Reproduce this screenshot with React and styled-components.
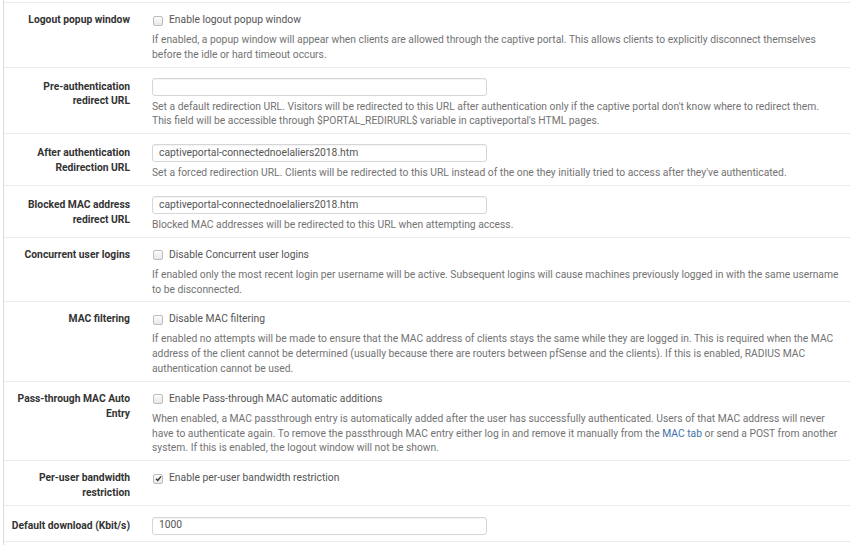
import styled, { createGlobalStyle } from "styled-components";

const GlobalStyle = createGlobalStyle`
  html, body {
    margin: 0;
    padding: 0;
    background: #fff;
  }
  body {
    font-family: Roboto, "Liberation Sans", Arial, sans-serif;
    font-size: 10.3px;
    line-height: 14.8px;
    color: #333;
  }
`;

const Panel = styled.div`
  margin-left: 3px;
  border-left: 1px solid #dcdcdc;
  padding-top: 2px;
  background: #fff;
`;

const Row = styled.div`
  display: grid;
  grid-template-columns: 127px 1fr;
  column-gap: 21px;
  padding: ${(p) => (p.$tall ? "11px 8px 6px 0" : "10px 8px 4px 0")};
  border-top: 1px solid #ebebeb;
`;

const Label = styled.div`
  text-align: right;
  font-weight: 700;
  color: #333;
  padding: ${(p) => (p.$input ? "2px" : "0")} 1px 0 7px;
`;

const Content = styled.div`
  display: flex;
  flex-direction: column;
  min-width: 0;
`;

const CheckLine = styled.label`
  display: flex;
  align-items: center;
  gap: 6px;
  color: #555;
  height: 15px;
  padding-left: 1px;
`;

const Box = styled.span`
  width: 8px;
  height: 8px;
  border: 1px solid #bdbdbd;
  border-radius: 2px;
  background: linear-gradient(#fdfdfd, #e8e8e8);
  display: flex;
  align-items: center;
  justify-content: center;
  flex-shrink: 0;
`;

const TextInput = styled.div`
  width: 335px;
  height: 18px;
  box-sizing: border-box;
  border: 1px solid #d6d6d6;
  border-radius: 3px;
  box-shadow: inset 0 1px 1px rgba(0, 0, 0, 0.05);
  padding: 0 6px;
  display: flex;
  align-items: center;
  color: #555;
`;

const Help = styled.div`
  margin-top: ${(p) => (p.$afterInput ? "4px" : "5px")};
  color: #737373;
`;

const Link = styled.a`
  color: #3f72a8;
  text-decoration: none;
`;

const Check = ({ checked, children }) => (
  <CheckLine>
    <Box>
      {checked && (
        <svg width="7" height="7" viewBox="0 0 10 10">
          <path d="M1.5 5.2 L4 7.8 L8.6 2" fill="none" stroke="#333" strokeWidth="2" />
        </svg>
      )}
    </Box>
    {children}
  </CheckLine>
);

const App = () => {
  return (
    <>
      <GlobalStyle />
      <Panel>
        <Row>
          <Label>Logout popup window</Label>
          <Content>
            <Check>Enable logout popup window</Check>
            <Help>
              If enabled, a popup window will appear when clients are allowed through the captive portal. This allows
              clients to explicitly disconnect themselves before the idle or hard timeout occurs.
            </Help>
          </Content>
        </Row>

        <Row>
          <Label $input>Pre-authentication redirect URL</Label>
          <Content>
            <TextInput />
            <Help $afterInput>
              Set a default redirection URL. Visitors will be redirected to this URL after authentication only if the
              captive portal don't know where to redirect them.
              <br />
              This field will be accessible through $PORTAL_REDIRURL$ variable in captiveportal's HTML pages.
            </Help>
          </Content>
        </Row>

        <Row>
          <Label $input>After authentication Redirection URL</Label>
          <Content>
            <TextInput>captiveportal-connectednoelaliers2018.htm</TextInput>
            <Help $afterInput>
              Set a forced redirection URL. Clients will be redirected to this URL instead of the one they initially
              tried to access after they've authenticated.
            </Help>
          </Content>
        </Row>

        <Row>
          <Label $input>Blocked MAC address redirect URL</Label>
          <Content>
            <TextInput>captiveportal-connectednoelaliers2018.htm</TextInput>
            <Help $afterInput>Blocked MAC addresses will be redirected to this URL when attempting access.</Help>
          </Content>
        </Row>

        <Row>
          <Label>Concurrent user logins</Label>
          <Content>
            <Check>Disable Concurrent user logins</Check>
            <Help>
              If enabled only the most recent login per username will be active. Subsequent logins will cause machines
              previously logged in with the same username to be disconnected.
            </Help>
          </Content>
        </Row>

        <Row>
          <Label>MAC filtering</Label>
          <Content>
            <Check>Disable MAC filtering</Check>
            <Help>
              If enabled no attempts will be made to ensure that the MAC address of clients stays the same while they
              are logged in. This is required when the MAC address of the client cannot be determined (usually because
              there are routers between pfSense and the clients). If this is enabled, RADIUS MAC authentication cannot
              be used.
            </Help>
          </Content>
        </Row>

        <Row>
          <Label>Pass-through MAC Auto Entry</Label>
          <Content>
            <Check>Enable Pass-through MAC automatic additions</Check>
            <Help>
              When enabled, a MAC passthrough entry is automatically added after the user has successfully
              authenticated. Users of that MAC address will never have to authenticate again. To remove the passthrough
              MAC entry either log in and remove it manually from the <Link href="#">MAC tab</Link> or send a POST from
              another system. If this is enabled, the logout window will not be shown.
            </Help>
          </Content>
        </Row>

        <Row>
          <Label>Per-user bandwidth restriction</Label>
          <Content>
            <Check checked>Enable per-user bandwidth restriction</Check>
          </Content>
        </Row>

        <Row $tall>
          <Label $input>Default download (Kbit/s)</Label>
          <Content>
            <TextInput>1000</TextInput>
          </Content>
        </Row>
        <Row />
      </Panel>
    </>
  );
};

export default App;
